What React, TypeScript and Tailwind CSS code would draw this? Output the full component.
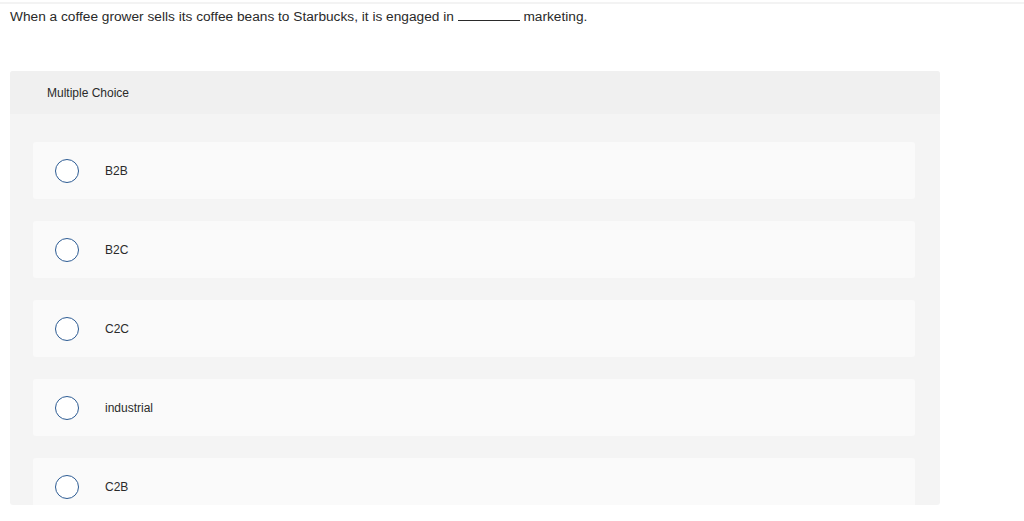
const options = ["B2B", "B2C", "C2C", "industrial", "C2B"];

export default function App() {
  return (
    <div className="min-h-[521px] bg-white pt-[2px] text-[#2a2a2a]" style={{ fontFamily: "'Liberation Sans', Arial, sans-serif" }}>
      <div className="border-t-2 border-[#f3f3f3]" />
      <p className="px-[10px] pt-[4px] text-[13.7px] leading-[18px]">
        When a coffee grower sells its coffee beans to Starbucks, it is engaged in{" "}
        <span className="inline-block w-[62px] border-b border-[#2a2a2a] align-baseline" /> marketing.
      </p>

      <div className="ml-[10px] mt-[45px] h-[434px] w-[930px] overflow-hidden rounded-[3px] bg-[#f4f4f4]">
        <div className="flex h-[43px] items-center bg-[#f0f0f0] pl-[37px] text-[12px]">Multiple Choice</div>

        <ul className="flex flex-col gap-[22px] pl-[23px] pt-[28px]">
          {options.map((opt) => (
            <li key={opt} className="flex h-[57px] w-[882px] shrink-0 items-center gap-[26px] rounded-[3px] bg-[#fafafa] pl-[22px]">
              <span className="h-6 w-6 shrink-0 rounded-full border border-[#2c5b93] bg-white" />
              <span className="text-[12px]">{opt}</span>
            </li>
          ))}
        </ul>
      </div>
    </div>
  );
}
